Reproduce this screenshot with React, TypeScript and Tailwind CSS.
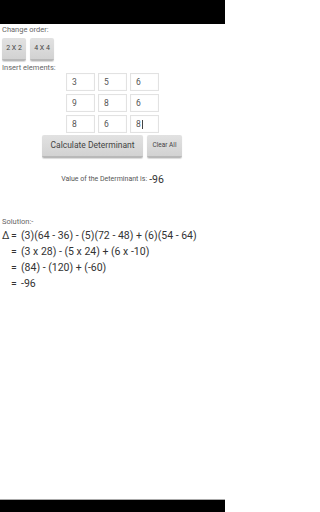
import React from 'react';

const matrix = [
  ['3', '5', '6'],
  ['9', '8', '6'],
  ['8', '6', '8'],
];

const steps = [
  { lead: 'Δ', text: '(3)(64 - 36) - (5)(72 - 48) + (6)(54 - 64)' },
  { lead: '', text: '(3 x 28) - (5 x 24) + (6 x -10)' },
  { lead: '', text: '(84) - (120) + (-60)' },
  { lead: '', text: '-96' },
];

const btn =
  'bg-gradient-to-b from-[#e2e2e2] to-[#d2d2d2] border-b-2 border-[#b8b8b8] rounded-[2px] shadow-[0_1px_1px_rgba(0,0,0,0.15)] text-[#444] font-normal';

export default function App() {
  return (
    <div className="w-[225px] h-[512px] bg-white flex flex-col overflow-hidden font-['Roboto',sans-serif]">
      <div className="h-[24px] bg-black shrink-0" />

      <div className="flex-1 flex flex-col">
        <p className="text-[7.5px] leading-[10px] text-[#666] pl-[2px] mt-[1px]">Change order:</p>
        <div className="flex gap-[4px] pl-[2px] mt-[3px]">
          <button className={`${btn} w-[24px] h-[23px] text-[7px]`}>2 X 2</button>
          <button className={`${btn} w-[24px] h-[23px] text-[7px]`}>4 X 4</button>
        </div>
        <p className="text-[7.5px] leading-[10px] text-[#666] pl-[2px] mt-[2px]">Insert elements:</p>

        <div className="flex flex-col gap-[3px] ml-[66px] mt-0">
          {matrix.map((row, r) => (
            <div key={r} className="flex gap-[3px]">
              {row.map((v, c) => (
                <div
                  key={c}
                  className="w-[29px] h-[18px] border border-[#e2e2e2] shadow-[inset_0_0_1px_rgba(0,0,0,0.08)] flex items-center pl-[5px] text-[8.5px] text-[#555]"
                >
                  {v}
                  {r === 2 && c === 2 && <span className="w-px h-[9px] bg-[#444] ml-[1px]" />}
                </div>
              ))}
            </div>
          ))}
        </div>

        <div className="flex gap-[4px] ml-[42px] mt-[2px]">
          <button className={`${btn} w-[101px] h-[23px] text-[8.5px]`}>Calculate Determinant</button>
          <button className={`${btn} w-[35px] h-[23px] text-[6.5px]`}>Clear All</button>
        </div>

        <div className="flex justify-center items-end mt-[14px] text-[#555]">
          <span className="text-[7px] leading-[10px]">Value of the Determinant is: </span>
          <span className="text-[10.5px] leading-[12px] text-[#333] ml-[2px] translate-y-[2px]">-96</span>
        </div>

        <p className="text-[7.5px] leading-[10px] text-[#666] pl-[2px] mt-[33px]">Solution:-</p>
        <div className="flex flex-col pl-[2px] mt-[1px] text-[10.5px] leading-[16px] text-[#333]">
          {steps.map((s, i) => (
            <div key={i} className="flex whitespace-nowrap">
              <span className="w-[9px]">{s.lead}</span>
              <span className="w-[10px]">=</span>
              <span>{s.text}</span>
            </div>
          ))}
        </div>
      </div>

      <div className="h-[13px] bg-black border-t border-[#aaa] shrink-0" />
    </div>
  );
}
